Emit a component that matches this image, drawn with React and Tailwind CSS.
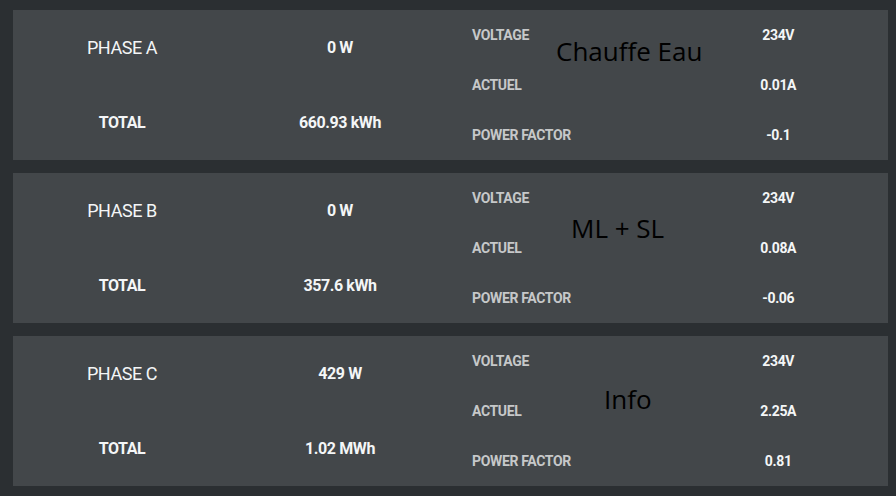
const phases = [
  { name: 'PHASE A', power: '0 W', total: '660.93 kWh', voltage: '234V', current: '0.01A', pf: '-0.1', note: 'Chauffe Eau', notePos: 'left-[543px] top-[22px]' },
  { name: 'PHASE B', power: '0 W', total: '357.6 kWh', voltage: '234V', current: '0.08A', pf: '-0.06', note: 'ML + SL', notePos: 'left-[558px] top-[36px]' },
  { name: 'PHASE C', power: '429 W', total: '1.02 MWh', voltage: '234V', current: '2.25A', pf: '0.81', note: 'Info', notePos: 'left-[591px] top-[44px]' },
];

const PhaseCard = ({ p }) => (
  <div className="relative h-[150px] bg-[#43474a] flex">
    <div className="w-[436px] grid grid-cols-2 grid-rows-2 text-[#f4f6f7]">
      <div className="flex items-center justify-center text-[18px] tracking-tight">{p.name}</div>
      <div className="flex items-center justify-center text-[16px] font-bold tracking-tight">{p.power}</div>
      <div className="flex items-center justify-center text-[16px] font-bold tracking-tight">TOTAL</div>
      <div className="flex items-center justify-center text-[16px] font-bold tracking-tight">{p.total}</div>
    </div>
    <div className="flex-1 grid grid-cols-2 grid-rows-3 text-[14px] font-bold tracking-tight">
      <div className="flex items-center pl-[23px] text-[#c6c8c9]">VOLTAGE</div>
      <div className="flex items-center justify-center text-[#f4f6f7]">{p.voltage}</div>
      <div className="flex items-center pl-[23px] text-[#c6c8c9]">ACTUEL</div>
      <div className="flex items-center justify-center text-[#f4f6f7]">{p.current}</div>
      <div className="flex items-center pl-[23px] text-[#c6c8c9]">POWER FACTOR</div>
      <div className="flex items-center justify-center text-[#f4f6f7]">{p.pf}</div>
    </div>
    {/* annotation written over the card */}
    <span className={`absolute ${p.notePos} text-[26px] text-black font-['Open_Sans',sans-serif]`}>{p.note}</span>
  </div>
);

export default function App() {
  return (
    <div className="w-[896px] h-[496px] bg-[#2b2f32] pl-[13px] pr-[8px] pt-[10px] flex flex-col gap-[13px] font-['Roboto',sans-serif]">
      {phases.map((p) => (
        <PhaseCard key={p.name} p={p} />
      ))}
    </div>
  );
}
